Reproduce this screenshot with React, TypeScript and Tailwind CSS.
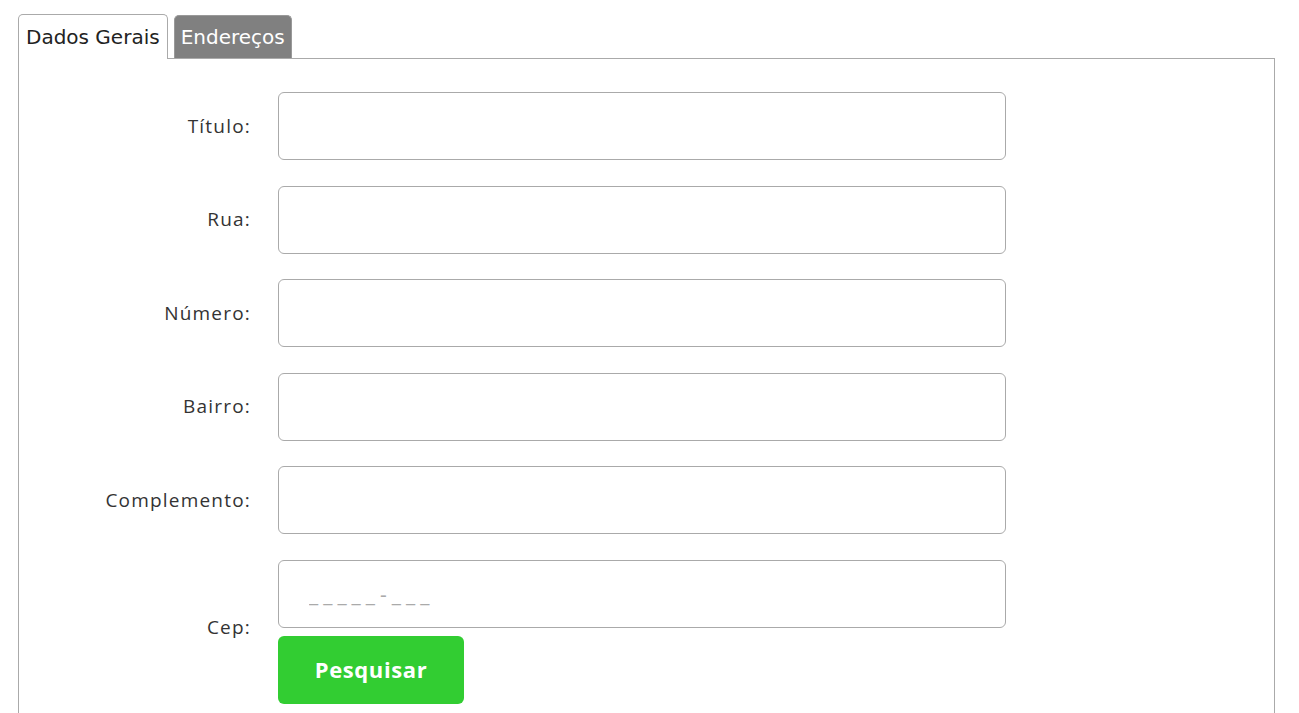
import React from 'react';

const fields = ['Título:', 'Rua:', 'Número:', 'Bairro:', 'Complemento:'];

export default function App() {
  return (
    <div className="min-h-screen bg-white pt-[14px] pl-[18px] pr-[24px]">
      <div className="flex items-end gap-[6px] font-['DejaVu_Sans',sans-serif] text-[20px]">
        <div className="h-[45px] px-[7px] flex items-center bg-white border border-b-0 border-[#aaa] rounded-t-[5px] text-[#222] -mb-px relative z-10">
          Dados Gerais
        </div>
        <div className="h-[43px] px-[6px] flex items-center bg-[#808080] border border-[#999] border-b-0 rounded-t-[5px] text-white">
          Endereços
        </div>
      </div>
      <div className="border border-[#aaa] border-b-0 h-[660px] pt-[33px] font-['Open_Sans',sans-serif] text-[19px] tracking-[1.2px] text-[#333]">
        <div className="flex flex-col gap-[25.5px]">
          {fields.map((f) => (
            <div key={f} className="flex items-center">
              <label className="w-[233px] text-right pr-px">{f}</label>
              <input className="ml-[26px] w-[728px] h-[68px] border border-[#aaa] rounded-[6px] outline-none px-[30px]" />
            </div>
          ))}
          <div className="flex items-center">
            <label className="w-[233px] text-right pr-px -mt-[8px]">Cep:</label>
            <div className="ml-[26px] flex flex-col gap-[8px]">
              <input
                placeholder="_____-___"
                className="w-[728px] h-[68px] border border-[#aaa] rounded-[6px] outline-none px-[30px] text-[21px] tracking-[5px] placeholder:text-[#aaa]"
              />
              <button className="w-[186px] h-[68px] rounded-[6px] bg-[#32cd32] text-white font-bold text-[22px] tracking-[0.6px] font-['Open_Sans',sans-serif]">
                Pesquisar
              </button>
            </div>
          </div>
        </div>
      </div>
    </div>
  );
}
